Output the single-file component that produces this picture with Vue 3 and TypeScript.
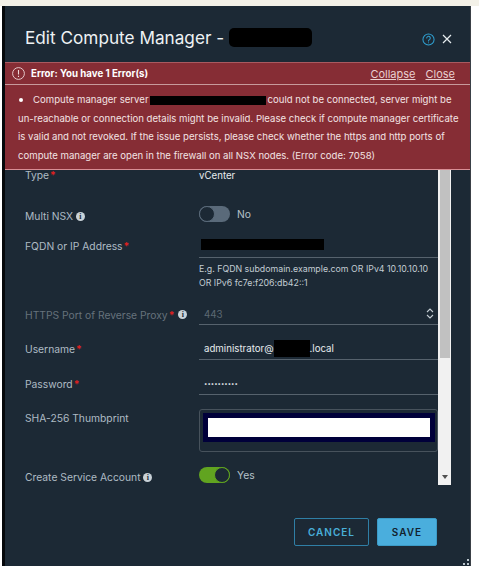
<script setup lang="ts">
const errorLines = [
  "un-reachable or connection details might be invalid. Please check if compute manager certificate",
  "is valid and not revoked. If the issue persists, please check whether the https and http ports of",
  "compute manager are open in the firewall on all NSX nodes. (Error code: 7058)",
];
</script>

<template>
  <div class="strip"></div>
  <div class="modal">
    <header class="head">
      <h3 class="title">Edit Compute Manager - <span class="mask-title"></span></h3>
      <div class="head-icons">
        <svg width="13" height="13" viewBox="0 0 14 14" fill="none" stroke="#2f9fd0" stroke-width="1.1">
          <circle cx="7" cy="7" r="6" />
          <path d="M5.1 5.5a1.9 1.9 0 1 1 2.9 1.6c-.7.4-1 .8-1 1.5" stroke-linecap="round" />
          <path d="M7 10.2v.8" />
        </svg>
        <svg width="10" height="10" viewBox="0 0 10 10" stroke="#e6ecef" stroke-width="1.2">
          <path d="M1 1l8 8M9 1l-8 8" />
        </svg>
      </div>
    </header>

    <section class="banner">
      <div class="banner-head">
        <svg width="13" height="13" viewBox="0 0 13 13" fill="none" stroke="#eed9da" stroke-width="0.9">
          <circle cx="6.5" cy="6.5" r="5.9" />
          <path d="M6.5 3v4.4M6.5 8.8v1.1" stroke-width="1.1" />
        </svg>
        <strong>Error: You have 1 Error(s)</strong>
        <a class="link collapse">Collapse</a>
        <a class="link">Close</a>
      </div>
      <div class="banner-body">
        <div class="line first">
          <i class="dot"></i>Compute manager server<span class="mask-server"></span>could not be connected, server might be
        </div>
        <div v-for="l in errorLines" :key="l" class="line">{{ l }}</div>
      </div>
    </section>

    <div class="scroller">
      <form class="form">
        <div class="row r-type">
          <label>Type<b>*</b></label>
          <div class="val">vCenter</div>
        </div>
        <div class="row r-multi">
          <label>Multi NSX <i class="info">i</i></label>
          <div class="toggle-wrap">
            <span class="toggle off"><span class="knob"></span></span>
            <span class="toggle-text">No</span>
          </div>
        </div>
        <div class="row r-fqdn">
          <label>FQDN or IP Address<b>*</b></label>
          <div class="val input"><span class="mask-fqdn"></span></div>
        </div>
        <div class="hint">
          <div>E.g. FQDN subdomain.example.com OR IPv4 10.10.10.10</div>
          <div>OR IPv6 fc7e:f206:db42::1</div>
        </div>
        <div class="row r-port">
          <label class="dim">HTTPS Port of Reverse Proxy<b>*</b> <i class="info">i</i></label>
          <div class="val input pad muted">
            443
            <svg class="spin" width="8" height="13" viewBox="0 0 8 13" fill="none" stroke="#c5ced4" stroke-width="1.1">
              <path d="M1 5l3-3 3 3M1 8l3 3 3-3" />
            </svg>
          </div>
        </div>
        <div class="row r-cred">
          <label>Username<b>*</b></label>
          <div class="val input pad">administrator@<span class="mask-user"></span>.local</div>
        </div>
        <div class="row r-cred">
          <label>Password<b>*</b></label>
          <div class="val input pad dots">••••••••••</div>
        </div>
        <div class="row r-sha">
          <label>SHA-256 Thumbprint</label>
          <div class="thumb"><div class="navy"><div class="white"></div></div></div>
        </div>
        <div class="row r-svc">
          <label>Create Service Account <i class="info">i</i></label>
          <div class="toggle-wrap">
            <span class="toggle on"><span class="knob"></span></span>
            <span class="toggle-text">Yes</span>
          </div>
        </div>
      </form>
      <div class="scrollbar">
        <div class="thumbbar"></div>
        <svg class="arrow" width="6" height="4" viewBox="0 0 6 4"><path d="M0 0h6L3 4z" fill="#505050" /></svg>
      </div>
    </div>

    <footer class="foot">
      <button class="btn cancel" type="button">CANCEL</button>
      <button class="btn save" type="button">SAVE</button>
      <svg class="grip" width="6" height="6" viewBox="0 0 6 6" fill="#b9c4cc">
        <rect x="4" y="0" width="2" height="2" /><rect x="0" y="4" width="2" height="2" /><rect x="4" y="4" width="2" height="2" />
      </svg>
    </footer>
  </div>
</template>

<style>
html, body { background: #fff; }
</style>

<style scoped>
.strip { height: 6px; background: #f3f1e8; }
.modal {
  width: 465px;
  height: 560px;
  margin-left: 2px;
  border-left: 3px solid #05080b;
  border-right: 1px solid #3a4046;
  background: #1c2935;
  font-family: Inter, "Liberation Sans", sans-serif;
  color: #dfe6ea;
  display: flex;
  flex-direction: column;
}
.head {
  height: 56px;
  padding: 0 18px 0 20px;
  display: flex;
  align-items: center;
  justify-content: space-between;
  flex: none;
}
.title { margin: 6px 0 0; font-size: 17.2px; font-weight: 400; color: #eef2f4; display: flex; align-items: center; white-space: pre; }
.mask-title { display: inline-block; width: 83px; height: 19px; background: #000; border-radius: 5px; }
.head-icons { display: flex; align-items: center; gap: 7px; margin-top: 10px; }

.banner {
  flex: none;
  height: 108px;
  box-sizing: border-box;
  background: #862d35;
  border-top: 1px solid #a95a60;
  border-bottom: 1px solid #d98e95;
  color: #f3e3e4;
  font-size: 9.6px;
}
.banner-head {
  height: 21px;
  padding: 0 15px 0 7px;
  border-bottom: 1px solid #c79a9c;
  display: flex;
  align-items: center;
}
.banner-head strong { margin-left: 6px; font-size: 9.7px; font-weight: 700; color: #fff; flex: 1; }
.link { text-decoration: underline; font-size: 11px; color: #e9cfd0; }
.collapse { margin-right: 10px; }
.banner-body { padding: 6px 0 0 13px; }
.line { height: 18.6px; line-height: 18.6px; white-space: nowrap; }
.line.first { padding-left: 1px; display: flex; align-items: center; white-space: pre; }
.dot { width: 4px; height: 4px; border-radius: 50%; background: #fff; margin-right: 10px; }
.mask-server { display: inline-block; width: 116px; height: 9px; margin: 0 2px 0 1px; background: #000; }

.scroller { flex: none; height: 315px; display: flex; overflow: hidden; }
.form { width: 433px; flex: none; font-size: 9.7px; }
.row { display: grid; grid-template-columns: 174px 1fr; padding-left: 20px; align-items: center; box-sizing: border-box; }
.row label { color: #aebbc4; font-size: 10.3px; display: flex; align-items: center; white-space: pre; }
.row label.dim { color: #66727c; }
.row label b { color: #e02020; font-weight: 700; margin-left: 1px; }
.val { color: #e6ebee; }
.input { height: 100%; box-sizing: border-box; border-bottom: 1px solid #56626d; display: flex; align-items: center; }
.pad { padding-left: 5px; }
.muted { color: #5d6974; justify-content: space-between; padding-right: 4px; }
.dots { font-size: 6px; color: #e6ebee; }
.info {
  display: inline-flex; align-items: center; justify-content: center;
  width: 9px; height: 9px; border-radius: 50%;
  background: #c9d2d8; color: #1c2935;
  font: 700 8px/9px "Liberation Serif", serif;
}
.r-type { height: 10px; margin-top: -1px; margin-bottom: 27px; }
.r-multi { height: 16px; margin-bottom: 10px; }
.r-multi label { margin-top: 4px; }
.r-fqdn { height: 26px; }
.r-fqdn label { margin-top: 2px; }
.mask-fqdn { display: inline-block; width: 123px; height: 11px; margin-left: 2px; background: #000; }
.hint { margin-left: 194px; padding-top: 4px; height: 46px; box-sizing: border-box; font-size: 8.8px; line-height: 14px; color: #c2ccd3; white-space: nowrap; }
.r-port { height: 21px; }
.r-port .info { margin-left: 4px; }
.spin { margin-top: -1px; }
.r-cred { height: 35px; padding-top: 13px; }
.mask-user { display: inline-block; width: 36px; height: 17px; background: #000; }
.r-sha { height: 43px; margin-top: 14px; margin-bottom: 14px; align-items: start; }
.r-sha label { margin-top: 3px; }
.thumb { height: 43px; box-sizing: border-box; border: 1px solid #47525c; border-radius: 3px; padding: 3px 2px 0 3px; }
.navy { height: 29px; box-sizing: border-box; background: #00003a; padding: 5px; }
.white { height: 19px; background: #fff; }
.r-svc { height: 16px; }
.r-svc label { margin-top: 5px; }
.toggle-wrap { display: flex; align-items: center; gap: 7px; }
.toggle { width: 31px; height: 16px; border-radius: 8px; box-sizing: border-box; position: relative; display: block; }
.toggle.off { background: #5a6a7a; }
.toggle.on { background: #61a420; }
.knob { position: absolute; top: 0; width: 16px; height: 16px; border-radius: 50%; box-sizing: border-box; background: #1c2935; }
.off .knob { left: 0; border: 1px solid #5a6a7a; }
.on .knob { right: 0; border: 1px solid #61a420; }
.toggle-text { color: #b6c2ca; font-size: 10.3px; }

.scrollbar { width: 13px; flex: none; background: #f1f1f1; display: flex; flex-direction: column; align-items: center; }
.thumbbar { width: 10px; height: 188px; background: #c1c1c1; }
.arrow { margin-top: auto; margin-bottom: 6px; }

.foot {
  flex: 1;
  position: relative;
  display: flex;
  justify-content: flex-end;
  gap: 8px;
  padding: 33px 33px 0 0;
}
.btn {
  height: 28px;
  border-radius: 2px;
  box-sizing: border-box;
  font: 600 10px Inter, "Liberation Sans", sans-serif;
  letter-spacing: 1px;
  padding: 0;
}
.cancel { width: 75px; background: transparent; border: 1px solid #2f7fa6; color: #49afd9; }
.save { width: 60px; background: #4aaedd; border: 1px solid #3c9bc7; color: #12222e; }
.grip { position: absolute; right: 1px; bottom: 1px; }
</style>
